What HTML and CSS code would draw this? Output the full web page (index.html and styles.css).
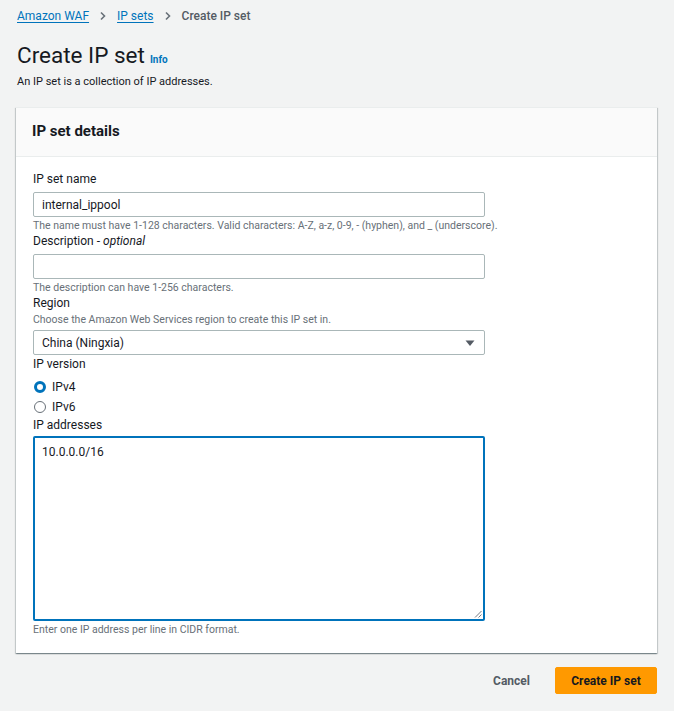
FILE: index.html
```html
<!DOCTYPE html>
<html lang="en">
<head>
<meta charset="utf-8">
<title>Create IP set</title>
<link rel="stylesheet" href="styles.css">
</head>
<body>
<div class="page">
  <nav class="breadcrumbs">
    <a class="crumb-link" href="#">Amazon WAF</a>
    <svg class="chev" width="10" height="10" viewBox="0 0 10 10"><path d="M3 1.5 L6.5 5 L3 8.5" fill="none" stroke="#687078" stroke-width="1.6"/></svg>
    <a class="crumb-link" href="#">IP sets</a>
    <svg class="chev" width="10" height="10" viewBox="0 0 10 10"><path d="M3 1.5 L6.5 5 L3 8.5" fill="none" stroke="#687078" stroke-width="1.6"/></svg>
    <span class="crumb-current">Create IP set</span>
  </nav>

  <header class="page-header">
    <h1 class="title">Create IP set <a class="info" href="#">Info</a></h1>
    <p class="subtitle">An IP set is a collection of IP addresses.</p>
  </header>

  <section class="card">
    <div class="card-header">
      <h2 class="card-title">IP set details</h2>
    </div>
    <div class="card-body">
      <div class="field">
        <label class="label">IP set name</label>
        <div class="input">internal_ippool</div>
        <div class="hint">The name must have 1-128 characters. Valid characters: A-Z, a-z, 0-9, - (hyphen), and _ (underscore).</div>
      </div>
      <div class="field">
        <label class="label">Description - <i>optional</i></label>
        <div class="input"></div>
        <div class="hint">The description can have 1-256 characters.</div>
      </div>
      <div class="field">
        <label class="label">Region</label>
        <div class="desc">Choose the Amazon Web Services region to create this IP set in.</div>
        <div class="input select">
          <span>China (Ningxia)</span>
          <svg class="caret" width="10" height="8" viewBox="0 0 10 8"><path d="M0.5 1.5 H9.5 L5 7 Z" fill="#545b64"/></svg>
        </div>
      </div>
      <div class="field field-tight">
        <label class="label">IP version</label>
        <div class="radio-row">
          <span class="radio checked"></span><span class="radio-label">IPv4</span>
        </div>
        <div class="radio-row">
          <span class="radio"></span><span class="radio-label">IPv6</span>
        </div>
      </div>
      <div class="field">
        <label class="label label-ta">IP addresses</label>
        <div class="textarea">
          <span>10.0.0.0/16</span>
          <svg class="grip" width="8" height="8" viewBox="0 0 8 8"><path d="M7.5 1 L1 7.5 M7.5 4.5 L4.5 7.5" stroke="#545b64" stroke-width="0.8" fill="none"/></svg>
        </div>
        <div class="hint">Enter one IP address per line in CIDR format.</div>
      </div>
    </div>
  </section>

  <div class="actions">
    <a class="btn-link" href="#">Cancel</a>
    <button class="btn-primary" type="button">Create IP set</button>
  </div>
</div>
</body>
</html>
```

FILE: styles.css
```css
* { box-sizing: border-box; }
html, body { margin: 0; padding: 0; }
body {
  background: #f2f3f3;
  font-family: Roboto, "Liberation Sans", Arial, sans-serif;
  color: #16191f;
  font-size: 12px;
}
.page {
  padding: 8px 17px 0 16px;
}
.breadcrumbs {
  display: flex;
  align-items: center;
  height: 16px;
  line-height: 16px;
  font-size: 12px;
  padding-left: 1px;
}
.crumb-link {
  color: #0073bb;
  text-decoration: underline;
  text-underline-offset: 2px;
}
.chev { margin: 0 9px 0 9px; }
.crumb-current {
  color: #545b64;
  font-weight: 500;
}
.page-header { padding: 16px 0 0 1px; }
.title {
  margin: 0;
  font-size: 22.5px;
  line-height: 30px;
  font-weight: 400;
  display: flex;
  align-items: baseline;
}
.info {
  color: #0073bb;
  font-size: 10px;
  font-weight: 700;
  text-decoration: none;
  margin-left: 5px;
}
.subtitle {
  margin: -1px 0 0;
  font-size: 11px;
  line-height: 16px;
  color: #16191f;
}
.card {
  margin-top: 17px;
  background: #fff;
  border-top: 1px solid #eaeded;
  box-shadow: 0 1px 1px 0 rgba(0,28,36,.3), 1px 1px 1px 0 rgba(0,28,36,.15), -1px 1px 1px 0 rgba(0,28,36,.15);
}
.card-header {
  background: #fafafa;
  border-bottom: 1px solid #eaeded;
  padding: 14px 16px 15px;
}
.card-title {
  margin: 0;
  font-size: 15px;
  line-height: 19px;
  font-weight: 700;
}
.card-body {
  padding: 14px 16px 16px 17px;
}
.field { display: flex; flex-direction: column; }
.label {
  font-size: 12px;
  line-height: 16px;
  margin-bottom: 5px;
}
.label-ta { margin-bottom: 3px; }
.label i { font-style: italic; }
.input {
  width: 452px;
  height: 25px;
  border: 1px solid #aab7b8;
  border-radius: 2px;
  background: #fff;
  padding: 0 8px;
  display: flex;
  align-items: center;
  font-size: 12px;
}
.hint {
  margin-top: 2px;
  font-size: 10.5px;
  line-height: 14px;
  color: #687078;
}
.desc {
  font-size: 10.5px;
  line-height: 14px;
  color: #687078;
  margin-top: -3px;
  margin-bottom: 3px;
}
.select { justify-content: space-between; padding-right: 9px; }
.field-tight { margin-top: 1px; }
.radio-row {
  display: flex;
  align-items: center;
  height: 20px;
}
.radio {
  width: 12px;
  height: 12px;
  border-radius: 50%;
  border: 1px solid #687078;
  margin-left: 1px;
  margin-right: 6px;
  background: #fff;
}
.radio.checked {
  border: 3.5px solid #0073bb;
}
.radio-label { font-size: 12px; }
.textarea {
  position: relative;
  width: 452px;
  height: 185px;
  border: 2px solid #0073bb;
  border-radius: 2px;
  padding: 6px 7px;
  font-size: 12px;
  line-height: 16px;
  background: #fff;
}
.grip { position: absolute; right: 1px; bottom: 1px; }
.actions {
  display: flex;
  justify-content: flex-end;
  align-items: center;
  margin-top: 14px;
}
.btn-link {
  color: #545b64;
  font-weight: 700;
  font-size: 12px;
  text-decoration: none;
  margin-right: 25px;
}
.btn-primary {
  background: #ff9900;
  border: 1px solid #ff9900;
  border-radius: 2px;
  color: #16191f;
  font-family: inherit;
  font-weight: 700;
  font-size: 12px;
  height: 27px;
  width: 102px;
  padding: 0;
  margin-right: 0;
}
```
